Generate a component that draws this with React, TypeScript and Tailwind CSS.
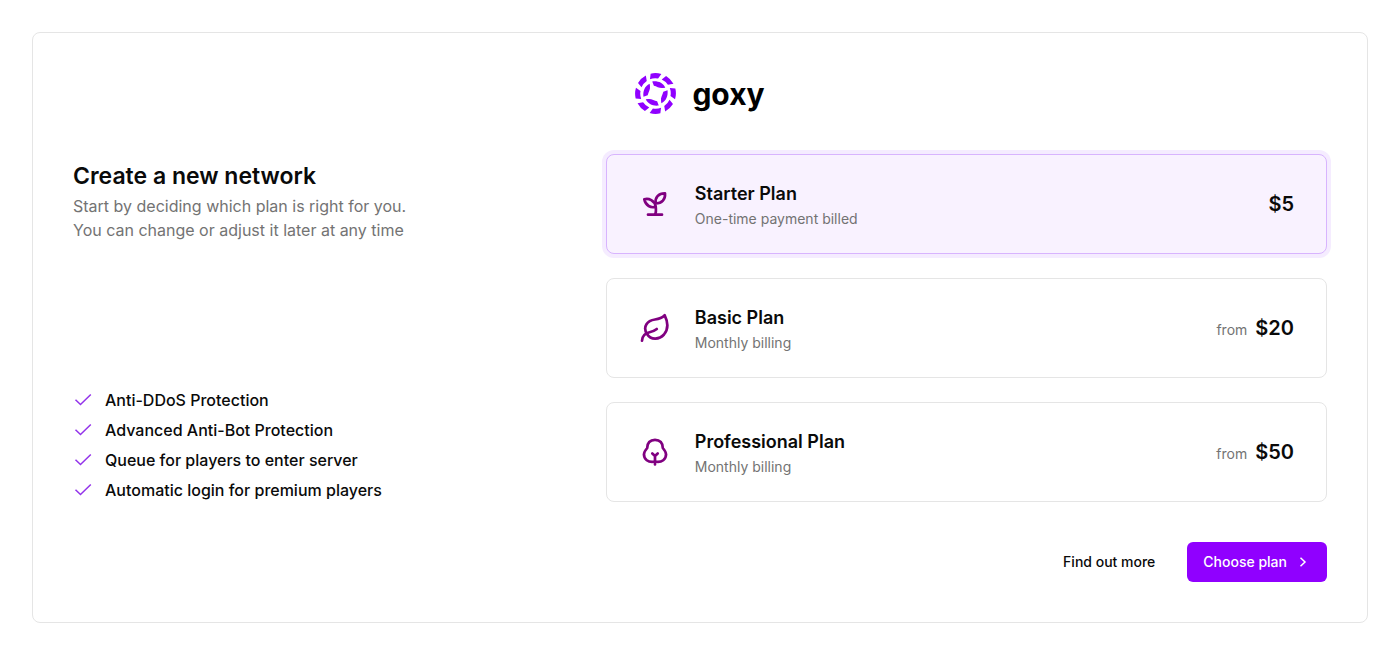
import React, { useState } from 'react';

interface IconProps {
  className?: string;
}

function SproutIcon({ className }: IconProps) {
  return (
    <svg viewBox="0 0 32 32" fill="none" stroke="currentColor" strokeWidth="2.7" strokeLinecap="round" strokeLinejoin="round" className={className} aria-hidden="true">
      <path d="M9 26.7h14" />
      <path d="M16 26.7c1-1.8 1.200-4 .7-8" />
      <path d="M16.700 18.700C12 20.500 6.500 17.500 5.300 11.300c4.500-1.200 10.200 1 11.400 7.400Z" />
      <path d="M16.700 15.500C15.700 9.500 19.500 5.200 26 5.300c.5 6-3 10-9.300 10.200Z" />
    </svg>
  );
}

function LeafIcon({ className }: IconProps) {
  return (
    <svg viewBox="0 0 32 32" fill="none" stroke="currentColor" strokeWidth="2.7" strokeLinecap="round" strokeLinejoin="round" className={className} aria-hidden="true">
      <path d="M8 22C3.500 15 8 8.500 16 7.500c4.500-.6 7-1.500 9.700-4.200C29 10 29.500 17 25 22.500c-4.500 5-13 6-17-.5Z" />
      <path d="M3 28.700c.3-5.500 3.500-7.700 7.500-8.500 3-.6 5-1.300 7.300-3.200" />
    </svg>
  );
}

function TreeIcon({ className }: IconProps) {
  return (
    <svg viewBox="0 0 32 32" fill="none" stroke="currentColor" strokeWidth="2.7" strokeLinecap="round" strokeLinejoin="round" className={className} aria-hidden="true">
      <path d="M16 25.500c-7 1.500-11.300-2.500-11-7.300.1-2.500 1.500-4.200 3.200-6.200C8.200 7 11 3.800 16 3.800s7.800 3.200 7.800 8.200c1.700 2 3.100 3.700 3.200 6.200.3 4.800-4 8.800-11 7.300Z" />
      <path d="M16 28.500v-8.500M13.300 17.500l2.700 2.500 2.700-2.500" />
    </svg>
  );
}

function CheckIcon({ className }: IconProps) {
  return (
    <svg viewBox="0 0 20 20" fill="none" stroke="currentColor" strokeWidth="1.5" className={className} aria-hidden="true">
      <path d="M2.500 9.700l5 4.800L17.800 4.500" />
    </svg>
  );
}

function Logo() {
  return (
    <div className="flex items-center justify-center gap-4">
      <svg viewBox="-63 -63 126 126" fill="#9000ff" className="size-[41px]" aria-hidden="true">
        {[0, 45, 90, 135, 180, 225, 270, 315].map((angle) => (
          <path key={angle} transform={`rotate(${angle})`} d="M-15-61A63 63 0 0 1 18-60L8-46A47 47 0 0 0-17-44Z" />
        ))}
        {[0, 90, 180, 270].map((angle) => (
          <path key={angle} transform={`rotate(${angle})`} d="M-10-37C8-39 23-33 30-18L23-17C13-15 4-22-5-24Z" />
        ))}
      </svg>
      <span className="font-[Inter] text-3xl leading-10 font-bold text-black">goxy</span>
    </div>
  );
}

const plans = [
  { id: 'starter', name: 'Starter Plan', billing: 'One-time payment billed', price: '$5', from: false, icon: SproutIcon },
  { id: 'basic', name: 'Basic Plan', billing: 'Monthly billing', price: '$20', from: true, icon: LeafIcon },
  { id: 'professional', name: 'Professional Plan', billing: 'Monthly billing', price: '$50', from: true, icon: TreeIcon },
];

const features = [
  'Anti-DDoS Protection',
  'Advanced Anti-Bot Protection',
  'Queue for players to enter server',
  'Automatic login for premium players',
];

export default function App() {
  const [selected, setSelected] = useState('starter');

  return (
    <main className="p-8 font-[Inter,sans-serif] text-[#0a0a0a]">
      <div className="rounded-lg border border-[#e5e5e5] p-10">
        <Logo />

        <div className="mt-10 grid grid-cols-5 gap-[78px]">
          {/* Intro and features */}
          <div className="col-span-2 flex flex-col justify-between pt-1">
            <div>
              <h1 className="text-[23px] leading-9 font-semibold">Create a new network</h1>
              <p className="text-[#737373]">
                Start by deciding which plan is right for you.
                <br />
                You can change or adjust it later at any time
              </p>
            </div>
            <ul className="space-y-1.5">
              {features.map((feature) => (
                <li key={feature} className="flex items-center gap-3 font-medium">
                  <CheckIcon className="size-5 text-[#9333ea]" />
                  {feature}
                </li>
              ))}
            </ul>
          </div>

          {/* Plan list */}
          <div className="col-span-3 space-y-6">
            {plans.map((plan) => {
              const Icon = plan.icon;
              const isSelected = selected === plan.id;
              return (
                <button
                  key={plan.id}
                  type="button"
                  aria-pressed={isSelected}
                  onClick={() => setSelected(plan.id)}
                  className={`flex w-full items-center gap-6 rounded-lg border px-8 py-6 text-left ${
                    isSelected ? 'border-[#d8b4fe] bg-[#f9f2ff] ring-4 ring-[#f5ecff]' : 'border-[#e5e5e5]'
                  }`}
                >
                  <Icon className="size-8 text-[#800080]" />
                  <span className="flex flex-1 flex-col">
                    <span className="text-lg leading-[30px] font-semibold">{plan.name}</span>
                    <span className="text-sm text-[#737373]">{plan.billing}</span>
                  </span>
                  <span className="flex items-baseline gap-2">
                    {plan.from && <span className="text-sm text-[#737373]">from</span>}
                    <span className="text-xl font-semibold">{plan.price}</span>
                  </span>
                </button>
              );
            })}
          </div>
        </div>

        {/* Actions */}
        <div className="mt-10 flex justify-end gap-4 text-sm font-medium">
          <button type="button" className="h-10 rounded-md px-4">Find out more</button>
          <button type="button" className="flex h-10 items-center gap-2 rounded-md bg-[#9000ff] px-4 text-white">
            Choose plan
            <svg viewBox="0 0 16 16" fill="none" stroke="currentColor" strokeWidth="1.5" className="size-4" aria-hidden="true">
              <path d="M5.500 3.700L10 8l-4.500 4.300" />
            </svg>
          </button>
        </div>
      </div>
    </main>
  );
}
